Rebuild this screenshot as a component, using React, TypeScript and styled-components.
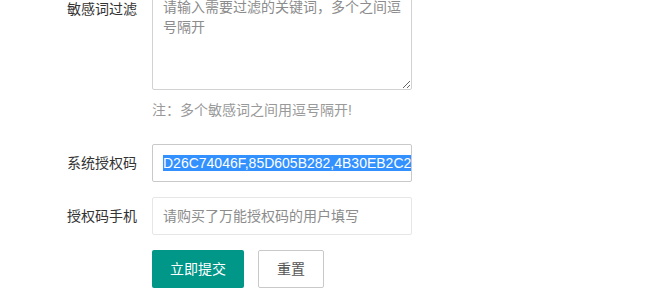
import React, { useEffect, useRef } from "react";
import styled, { createGlobalStyle } from "styled-components";

const Global = createGlobalStyle`
  html, body { margin: 0; padding: 0; background: #fff; overflow: hidden; }
  body {
    font-family: "Liberation Sans", "Noto Sans CJK SC", sans-serif;
    font-size: 14px;
    color: #333;
  }
`;

const Form = styled.form`
  margin-top: -10px;
  padding-left: 42px;
  display: flex;
  flex-direction: column;
`;

const Item = styled.div<{ $mb?: number }>`
  display: grid;
  grid-template-columns: 110px 260px;
  margin-bottom: ${(p) => (p.$mb ?? 15)}px;
`;

const Label = styled.label`
  box-sizing: border-box;
  padding: 9px 15px;
  line-height: 20px;
  text-align: right;
  color: #333;
  white-space: nowrap;
`;

const TextArea = styled.textarea`
  box-sizing: border-box;
  width: 260px;
  height: 100px;
  padding: 6px 10px;
  line-height: 20px;
  border: 1px solid #d2d2d2;
  border-radius: 2px;
  font-family: inherit;
  font-size: 14px;
  color: #333;
  outline: none;
  display: block;
  &::placeholder { color: #8c8c8c; }
`;

const Help = styled.div`
  grid-column: 2;
  padding: 10px 0 9px;
  line-height: 20px;
  color: #999;
  white-space: nowrap;
`;

const Input = styled.input<{ $active?: boolean }>`
  box-sizing: border-box;
  width: 260px;
  height: 38px;
  padding: 0 0 0 10px;
  border: 1px solid ${(p) => (p.$active ? "#c9c9c9" : "#e6e6e6")};
  border-radius: 2px;
  font-family: inherit;
  font-size: 14px;
  color: #333;
  outline: none;
  background: #fff;
  &::placeholder { color: #8c8c8c; }
  &::selection { background: #3390ff; color: #fff; }
`;

const Buttons = styled.div`
  grid-column: 2;
  display: flex;
  gap: 14px;
`;

const Button = styled.button<{ $primary?: boolean }>`
  box-sizing: border-box;
  height: 38px;
  padding: 0 18px;
  border-radius: 2px;
  font-family: inherit;
  font-size: 14px;
  line-height: 36px;
  cursor: pointer;
  border: ${(p) => (p.$primary ? "none" : "1px solid #c9c9c9")};
  background: ${(p) => (p.$primary ? "#009688" : "#fff")};
  color: ${(p) => (p.$primary ? "#fff" : "#555")};
`;

const CODE = "D26C74046F,85D605B282,4B30EB2C2A,9F1E6C3D70";

export default function App() {
  const ref = useRef<HTMLInputElement>(null);
  useEffect(() => {
    const el = ref.current;
    if (el) {
      el.focus();
      el.setSelectionRange(0, el.value.length, "backward");
      el.scrollLeft = 0;
    }
  }, []);
  return (
    <>
      <Global />
      <Form onSubmit={(e) => e.preventDefault()}>
        <Item $mb={0}>
          <Label>敏感词过滤</Label>
          <TextArea placeholder="请输入需要过滤的关键词，多个之间逗号隔开" />
        </Item>
        <Item>
          <Help>注：多个敏感词之间用逗号隔开!</Help>
        </Item>
        <Item>
          <Label>系统授权码</Label>
          <Input ref={ref} $active defaultValue={CODE} />
        </Item>
        <Item>
          <Label>授权码手机</Label>
          <Input placeholder="请购买了万能授权码的用户填写" />
        </Item>
        <Item>
          <Buttons>
            <Button $primary type="submit">立即提交</Button>
            <Button type="reset">重置</Button>
          </Buttons>
        </Item>
      </Form>
    </>
  );
}
